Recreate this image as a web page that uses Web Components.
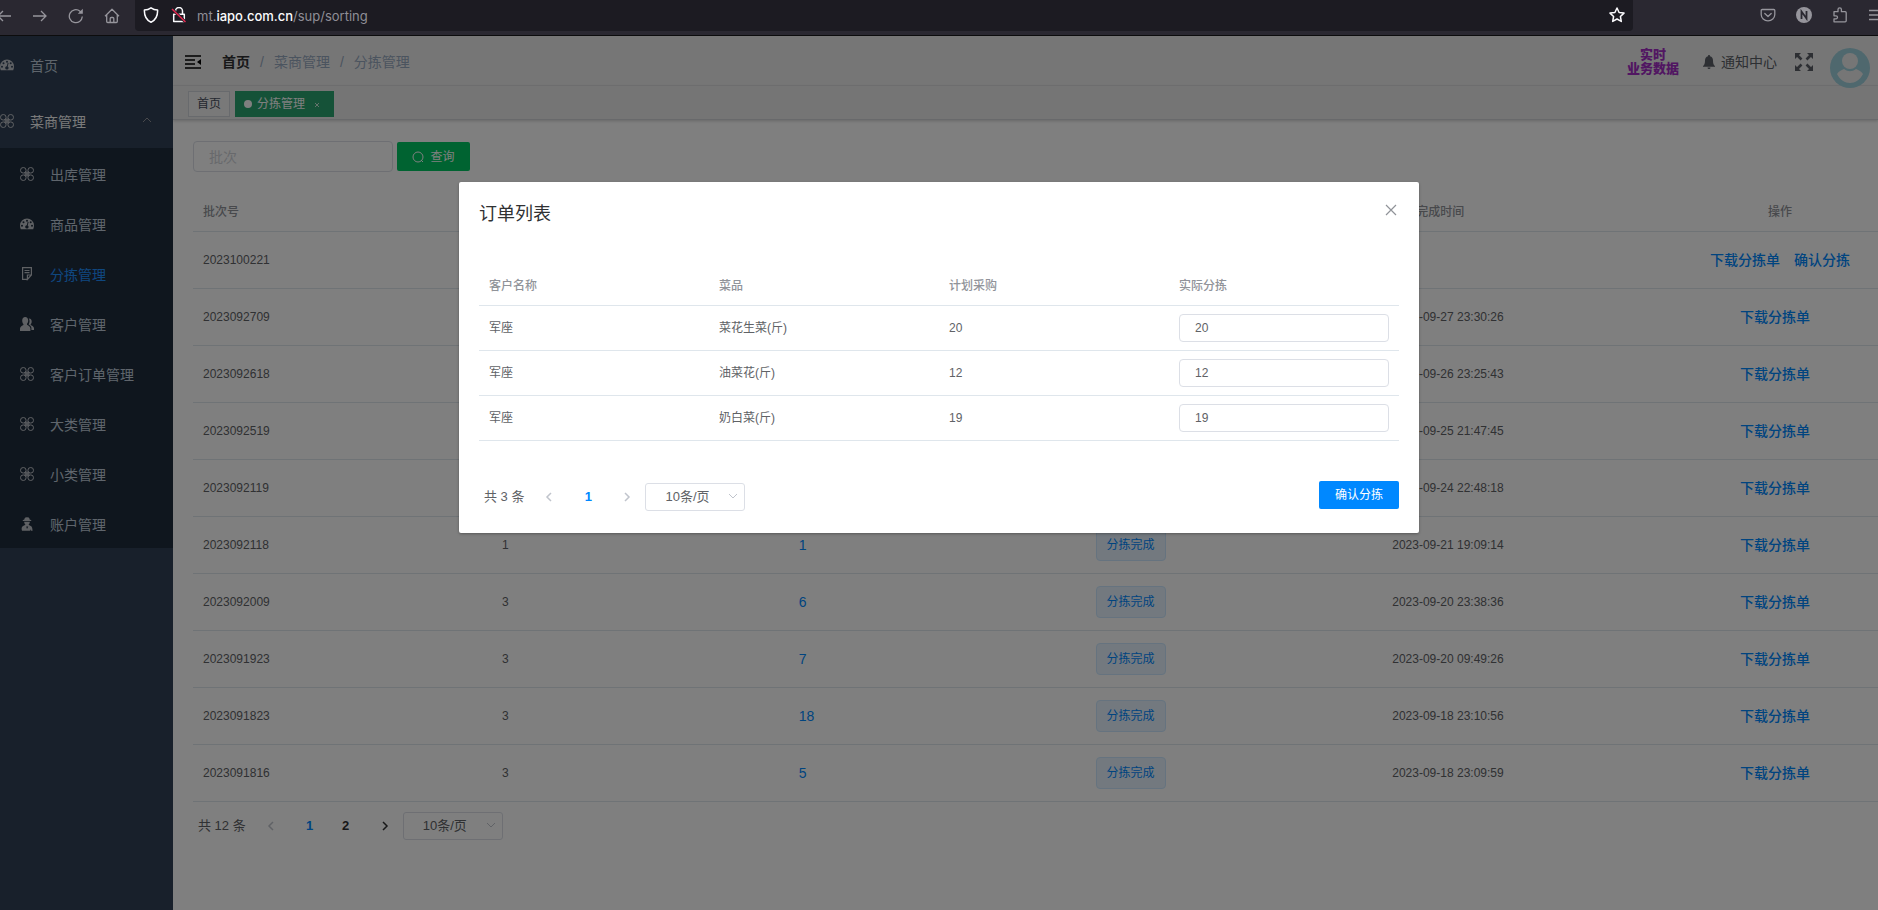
<!DOCTYPE html>
<html lang="zh-CN">
<head>
<meta charset="UTF-8">
<title>分拣管理</title>
<style>
    html, body {
        margin: 0;
        height: 100%;
        overflow: hidden;
        background: #fff;
    }
    body {
        display: flex;
        flex-direction: column;
        font-family: "Liberation Sans", "Noto Sans CJK SC", sans-serif;
        font-size: 12px;
        line-height: 20px;
        color: #606266;
        --primary: #0088ff;
        --line: #dfe6ec;
        --border: #dcdfe6;
    }
</style>
</head>
<body>
<c-browser-bar></c-browser-bar>
<c-layout>
    <c-sidebar slot="side"></c-sidebar>
    <c-navbar slot="top"></c-navbar>
    <c-tags slot="top"></c-tags>
    <c-sorting-page></c-sorting-page>
    <c-dialog slot="dialog" heading="订单列表">
        <c-order-table></c-order-table>
        <c-pagination slot="footer" total="3" pages="1"></c-pagination>
        <c-button slot="footer">确认分拣</c-button>
    </c-dialog>
</c-layout>

<script>
const BASE = `
    :host, *, *::before, *::after { box-sizing: border-box; }
    button, input, select { font: inherit; color: inherit; margin: 0; }
    button { border: 0; background: none; padding: 0; cursor: pointer; }
    a { color: inherit; text-decoration: none; }
    svg { display: block; flex: none; }
`;

const ICONS = {
    dashboard: `<path fill="currentColor" fill-rule="evenodd" d="M7 1.500a7 7 0 0 0-7 7c0 1.500.3 2.700.8 3.700h12.400c.5-1 .8-2.200.8-3.700a7 7 0 0 0-7-7zM7 2.700a1 1 0 1 1 0 2 1 1 0 0 1 0-2zM3.500 4.200a1 1 0 1 1 0 2 1 1 0 0 1 0-2zM2 7.700a1 1 0 1 1 0 2 1 1 0 0 1 0-2zM12 7.700a1 1 0 1 1 0 2 1 1 0 0 1 0-2zM7.700 4.800l.9.200-.9 3.400a1.700 1.700 0 1 1-.9-.2zM10.700 4.200a1 1 0 1 1 0 2 1 1 0 0 1 0-2z"/>`,
    component: `<g fill="none" stroke="currentColor" stroke-width="1"><circle cx="3.300" cy="3.300" r="2.800"/><circle cx="10.700" cy="3.300" r="2.800"/><circle cx="3.300" cy="10.700" r="2.800"/><circle cx="10.700" cy="10.700" r="2.800"/></g><path fill="currentColor" opacity=".8" d="M5.500 4.500h3l1 1v3l-1 1h-3l-1-1v-3z"/>`,
    note: `<g fill="none" stroke="currentColor" stroke-width="1.200"><path d="M7.500 12.400H2.600V.6h8.800v7.400l-4 4.400V8h4"/><path d="M4.500 3.500h5M4.500 5.700h5"/></g>`,
    peoples: `<path fill="currentColor" d="M5.200 0C7 0 8.200 1.400 8.200 3.400c0 1.600-.6 2.700-1.200 3.400v1c1 .7 3.200 1.500 3.400 3.400V14H0v-2.600C.2 9.500 2.300 8.700 3.400 7.900v-1C2.700 6.200 2.200 5 2.200 3.400 2.200 1.400 3.400 0 5.200 0zM8.800 1.500c1.800-.1 2.900 1.200 2.900 3 0 1.300-.5 2.200-1 2.800v.8c1 .6 3 1.400 3.300 2.900v2h-2.600v-2.300C11.200 9 9.700 8 8.600 7.400c.6-.9 1-2.200.9-3.400 0-1-.2-1.700-.7-2.500z"/>`,
    farmer: `<path fill="currentColor" fill-rule="evenodd" d="M4.200 2.700C4.500 1 5.300 0 6.500.2L7 .5l.6-.3C8.800 0 9.600 1 9.800 2.700l1.500.4-.2.800H2.900l-.2-.8zM4.200 4.700h5.600c0 1.300-.6 2.400-1.300 3l2.700 1.500c.7.500 1 1.700 1.200 3l.2 1.500-1.800.1-.4-1.500-.5 1.500H2L1.600 12c.1-1.700.6-2.500 1.400-2.900L5.500 7.700c-.7-.6-1.300-1.700-1.300-3zM6.200 9.400l.8 2.600 1.300-2.500z"/>`
};
const icon = (name, size = 14) => `<svg width="${size}" height="${size}" viewBox="0 0 14 14" aria-hidden="true">${ICONS[name]}</svg>`;

class BaseElement extends HTMLElement {
    connectedCallback() {
        if (this.shadowRoot) return;
        const template = document.createElement('template');
        template.innerHTML = `<style>${BASE}${this.styles()}</style>${this.render()}`;
        this.attachShadow({mode: 'open'}).appendChild(template.content.cloneNode(true));
    }
    styles() { return ''; }
    render() { return '<slot></slot>'; }
}

class cBrowserBar extends BaseElement {
    styles() {
        return `
            :host {
                display: flex;
                flex: none;
                align-items: flex-start;
                height: 36px;
                background: #2a2831;
                border-bottom: 1px solid #0c0c0d;
                color: #96959c;
                overflow: hidden;
            }
            .nav {
                display: flex;
                flex: none;
                width: 139px;
                gap: 20px;
                margin-left: -4px;
                padding-top: 8px;
            }
            .url {
                flex: 1;
                display: flex;
                align-items: center;
                height: 31px;
                padding: 0 8px;
                background: #1c1b22;
                border-radius: 0 0 4px 4px;
                color: #fbfbfe;
            }
            .url svg { margin-top: -2px; }
            .url svg + svg { margin-left: 12px; }
            .address {
                flex: 1;
                margin-left: 10px;
                font-family: Inter, sans-serif;
                font-size: 13px;
                color: #8f8e96;
            }
            .address b { color: #fbfbfe; font-weight: 500; }
            .tools {
                display: flex;
                flex: none;
                width: 245px;
                padding: 7px 0 0 127px;
                gap: 20px;
            }
        `;
    }
    render() {
        return `
            <div class="nav">
                <button aria-label="后退"><svg width="16" height="16" viewBox="0 0 16 16" fill="none" stroke="currentColor" stroke-width="1.300"><path d="M15 8H2M7 3 2 8l5 5"/></svg></button>
                <button aria-label="前进"><svg width="16" height="16" viewBox="0 0 16 16" fill="none" stroke="currentColor" stroke-width="1.300"><path d="M1 8h13M9 3l5 5-5 5"/></svg></button>
                <button aria-label="刷新"><svg width="16" height="16" viewBox="0 0 16 16" fill="none" stroke="currentColor" stroke-width="1.300"><path d="M14.300 8.500A6.500 6.500 0 1 1 12 3.200l1.500 1.600"/><path d="M14.800.8v5H9.800z" fill="currentColor" stroke="none"/></svg></button>
                <button aria-label="主页"><svg width="16" height="16" viewBox="0 0 16 16" fill="none" stroke="currentColor" stroke-width="1.300" stroke-linejoin="round"><path d="M1 8.200 8 1.200l7 7M2.700 7v6.500a1 1 0 0 0 1 1h8.600a1 1 0 0 0 1-1V7M6.200 14.500v-4a1 1 0 0 1 1-1h1.600a1 1 0 0 1 1 1v4"/></svg></button>
            </div>
            <div class="url">
                <svg width="16" height="16" viewBox="0 0 16 16" fill="none" stroke="currentColor" stroke-width="1.500" stroke-linejoin="round"><path d="M8 .8c2 1.500 4.200 2.200 6.600 2.300C14.800 8.800 12.500 13.200 8 15.200 3.500 13.200 1.200 8.800 1.400 3.100 3.800 3 6 2.300 8 .8z"/></svg>
                <svg width="16" height="16" viewBox="0 0 16 16" fill="none"><path d="M4.500 7V4a3.500 3.500 0 0 1 7 0v3M2.700 7.200h10.600v7.300H2.700z" stroke="currentColor" stroke-width="1.500" stroke-linejoin="round"/><path d="m1 2 13.500 13" stroke="#1c1b22" stroke-width="3"/><path d="m1 2 13.500 13" stroke="#e22850" stroke-width="1.500"/></svg>
                <span class="address">mt.<b>iapo.com.cn</b>/sup/sorting</span>
                <svg width="16" height="16" viewBox="0 0 16 16" fill="none" stroke="currentColor" stroke-width="1.500" stroke-linejoin="round"><path d="m8 1 2.100 4.500 4.900.6-3.600 3.400.9 4.900L8 12l-4.300 2.400.9-4.900L1 6.100l4.900-.6z"/></svg>
            </div>
            <div class="tools">
                <button aria-label="Pocket"><svg width="16" height="16" viewBox="0 0 16 16" fill="none" stroke="currentColor" stroke-width="1.300" stroke-linejoin="round" stroke-linecap="round"><path d="M2.200 2.500h11.600a1 1 0 0 1 1 1V7.500a6.800 6.400 0 0 1-13.600 0V3.500a1 1 0 0 1 1-1zM4.800 6.500 8 9.500l3.200-3"/></svg></button>
                <button aria-label="账号"><svg width="16" height="16" viewBox="0 0 16 16"><circle cx="8" cy="8" r="8" fill="#96959c"/><path d="M5.500 12V4.500l5 7V4" fill="none" stroke="#2a2831" stroke-width="1.800"/></svg></button>
                <button aria-label="扩展"><svg width="16" height="16" viewBox="0 0 16 16" fill="none" stroke="currentColor" stroke-width="1.300" stroke-linejoin="round"><path d="M2 6.500V4.700h4V2.500a1.700 1.700 0 0 1 3.400 0v2.200h3.800a1 1 0 0 1 1 1v8.100a1 1 0 0 1-1 1H2v-3h2a1.500 1.500 0 0 0 0-3H2z"/></svg></button>
                <button aria-label="菜单"><svg width="16" height="16" viewBox="0 0 16 16" fill="none" stroke="currentColor" stroke-width="1.300"><path d="M1 3.500h14M1 8h14M1 12.500h14"/></svg></button>
            </div>
        `;
    }
}

class cLayout extends BaseElement {
    styles() {
        return `
            :host {
                display: flex;
                flex: 1;
                min-height: 0;
                position: relative;
            }
            main { flex: 1; min-width: 0; overflow: hidden; }
        `;
    }
    render() {
        return `
            <slot name="side"></slot>
            <main><slot name="top"></slot><slot></slot></main>
            <slot name="dialog"></slot>
        `;
    }
}

class cSidebar extends BaseElement {
    items = [
        ['component', '出库管理'],
        ['dashboard', '商品管理'],
        ['note', '分拣管理'],
        ['peoples', '客户管理'],
        ['component', '客户订单管理'],
        ['component', '大类管理'],
        ['component', '小类管理'],
        ['farmer', '账户管理']
    ];
    styles() {
        return `
            :host {
                display: block;
                flex: none;
                width: 173px;
                background: #304156;
                color: #bfcbd9;
                font-size: 14px;
                line-height: normal;
            }
            a, .group {
                display: flex;
                align-items: center;
                width: 100%;
                height: 56px;
                gap: 16px;
                padding: 2px 20px 0 0;
            }
            .group { color: #f4f4f5; }
            .group span { flex: 1; text-align: left; }
            svg { color: #bfc2c8; }
            nav { background: #1f2d3d; }
            nav a { height: 50px; padding-left: 20px; }
            a.active { color: #1f8fff; }
        `;
    }
    render() {
        return `
            <a href="#home">${icon('dashboard')}<span>首页</span></a>
            <button class="group">${icon('component')}<span>菜商管理</span>
                <svg width="12" height="12" viewBox="0 0 12 12" fill="none" stroke="#909399"><path d="m2 7 4-4 4 4"/></svg></button>
            <nav>${this.items.map(([name, text]) => `<a href="#${text}"${text === '分拣管理' ? ' class="active"' : ''}>${icon(name)}<span>${text}</span></a>`).join('')}</nav>
        `;
    }
}

class cNavbar extends BaseElement {
    styles() {
        return `
            :host {
                display: flex;
                align-items: center;
                height: 50px;
                padding: 2px 8px 0 12px;
                background: #ededed;
                border-bottom: 1px solid #e2e2e4;
                font-size: 14px;
                color: #5a5e66;
            }
            .crumbs {
                display: flex;
                flex: 1;
                align-items: baseline;
                gap: 10px;
                margin-left: 21px;
                color: #97a8be;
            }
            .crumbs a { color: #303133; font-weight: 700; }
            .live {
                width: 52px;
                text-align: center;
                font-size: 13px;
                line-height: 14px;
                font-weight: 900;
                color: #a32cc4;
            }
            .notice { display: flex; align-items: center; gap: 6px; margin: 0 18px 0 24px; }
            .avatar { margin: 12px 0 0 17px; }
        `;
    }
    render() {
        return `
            <button aria-label="收起菜单"><svg width="16" height="14" viewBox="0 0 16 14" fill="none" stroke="#000" stroke-width="1.500"><path d="M0 1h16M0 5h10M0 9h10M0 13h16"/><path d="M16 4v6l-4-3z" fill="#000" stroke="none"/></svg></button>
            <div class="crumbs"><a href="#home">首页</a><span>/</span><span>菜商管理</span><span>/</span><span>分拣管理</span></div>
            <div class="live">实时<br>业务数据</div>
            <div class="notice"><svg width="12" height="14" viewBox="0 0 12 14" fill="currentColor"><path d="M6 0c.8 0 1 .5 1 1.200 2 .5 3 2.200 3 4.200 0 3 .6 4.600 2 5.600v.8H0V11c1.400-1 2-2.600 2-5.600 0-2 1-3.700 3-4.200C5 .5 5.200 0 6 0zM4.500 12.500h3a1.500 1.500 0 0 1-3 0z"/></svg><span>通知中心</span></div>
            <button aria-label="全屏"><svg width="18" height="18" viewBox="0 0 18 18" fill="#5a5e66" stroke="#5a5e66" stroke-width="2.600"><path d="m2 2 4.500 4.500M16 2l-4.500 4.500M2 16l4.500-4.500M16 16l-4.500-4.500"/><path stroke="none" d="M0 0h6L0 6zM18 0v6l-6-6zM0 18v-6l6 6zM18 18h-6l6-6z"/></svg></button>
            <svg class="avatar" width="40" height="40" viewBox="0 0 40 40"><circle cx="20" cy="20" r="20" fill="#9fd0dc"/><circle cx="20" cy="13" r="8" fill="#ededed"/><path d="M7 26c2-3 5-4 7-5 4 3 8 3 12 0 2 1 5 2 7 5-3 6-8 9-13 9S10 32 7 26z" fill="#ededed"/></svg>
        `;
    }
}

class cTags extends BaseElement {
    styles() {
        return `
            :host {
                display: flex;
                gap: 5px;
                height: 34px;
                padding: 5px 15px 0;
                background: #ebebeb;
                border-bottom: 1px solid #d0d2d6;
                box-shadow: 0 1px 3px rgba(0, 0, 0, .2);
            }
            a {
                display: flex;
                align-items: center;
                height: 26px;
                padding: 0 8px;
                border: 1px solid #d0d4da;
                color: #495060;
                background: #f3f3f3;
            }
            a.active {
                gap: 5px;
                background: #2ba471;
                border-color: #2ba471;
                color: #fff;
                padding-right: 13px;
            }
            a.active::before {
                content: '';
                width: 8px;
                height: 8px;
                border-radius: 50%;
                background: #fff;
            }
            svg { margin: 2px 0 0 4px; }
        `;
    }
    render() {
        return `
            <a href="#home">首页</a>
            <a href="#sorting" class="active">分拣管理<svg width="6" height="6" viewBox="0 0 6 6" stroke="#c8e6d9"><path d="m1 1 4 4M5 1 1 5"/></svg></a>
        `;
    }
}

class cSortingPage extends BaseElement {
    rows = [
        {batch: '2023100221', pending: true},
        {batch: '2023092709', time: '2023-09-27 23:30:26'},
        {batch: '2023092618', time: '2023-09-26 23:25:43'},
        {batch: '2023092519', time: '2023-09-25 21:47:45'},
        {batch: '2023092119', time: '2023-09-24 22:48:18'},
        {batch: '2023092118', customers: 1, dishes: 1, state: '分拣完成', time: '2023-09-21 19:09:14'},
        {batch: '2023092009', customers: 3, dishes: 6, state: '分拣完成', time: '2023-09-20 23:38:36'},
        {batch: '2023091923', customers: 3, dishes: 7, state: '分拣完成', time: '2023-09-20 09:49:26'},
        {batch: '2023091823', customers: 3, dishes: 18, state: '分拣完成', time: '2023-09-18 23:10:56'},
        {batch: '2023091816', customers: 3, dishes: 5, state: '分拣完成', time: '2023-09-18 23:09:59'}
    ];
    styles() {
        return `
            :host { display: block; padding: 21px 0 0 20px; }
            form { display: flex; align-items: center; gap: 4px; margin-bottom: 20px; }
            input {
                width: 200px;
                height: 31px;
                padding: 0 15px;
                border: 1px solid var(--border);
                border-radius: 4px;
                background: #fff;
                font-size: 14px;
            }
            input::placeholder { color: #d0d3d9; }
            form button {
                display: flex;
                align-items: center;
                justify-content: center;
                gap: 6px;
                width: 73px;
                height: 29px;
                border-radius: 2px;
                background: #00c763;
                color: #fff;
            }
            /* the table runs slightly past the right edge */
            table {
                width: calc(100% + 3px);
                table-layout: fixed;
                border-collapse: separate;
                border-spacing: 0;
            }
            col.batch { width: 299px; }
            col.action { width: 202px; }
            th, td {
                height: 57px;
                padding: 0 10px;
                text-align: left;
                border-bottom: 1px solid var(--line);
            }
            th { height: 40px; color: #909399; font-weight: 500; }
            td a { color: var(--primary); font-size: 14px; }
            .tag {
                display: inline-block;
                height: 32px;
                line-height: 30px;
                padding: 0 10px;
                border: 1px solid #cce7ff;
                border-radius: 4px;
                background: #e6f3ff;
                color: var(--primary);
            }
            tr > :last-child { text-align: center; }
            td button { color: var(--primary); font-size: 14px; font-weight: 500; margin-right: 10px; }
            td button + button { margin: 0 0 0 4px; }
            c-pagination { margin-top: 8px; }
        `;
    }
    render() {
        return `
            <form>
                <input type="text" placeholder="批次" aria-label="批次">
                <button type="button"><svg width="12" height="12" viewBox="0 0 12 12" fill="none" stroke="#fff" stroke-width="1"><circle cx="6" cy="6" r="5"/><path d="m9 9 2 2"/></svg>查询</button>
            </form>
            <table>
                <colgroup><col class="batch"><col><col><col><col><col class="action"></colgroup>
                <thead><tr><th>批次号</th><th></th><th></th><th></th><th>分拣完成时间</th><th>操作</th></tr></thead>
                <tbody>${this.rows.map(row => `
                    <tr>
                        <td>${row.batch}</td>
                        <td>${row.customers || ''}</td>
                        <td>${row.dishes ? `<a href="#${row.batch}">${row.dishes}</a>` : ''}</td>
                        <td>${row.state ? `<span class="tag">${row.state}</span>` : ''}</td>
                        <td>${row.time || ''}</td>
                        <td><button>下载分拣单</button>${row.pending ? '<button>确认分拣</button>' : ''}</td>
                    </tr>`).join('')}
                </tbody>
            </table>
            <c-pagination total="12" pages="2"></c-pagination>
        `;
    }
}

class cPagination extends BaseElement {
    styles() {
        return `
            :host {
                display: flex;
                align-items: center;
                padding: 2px 5px;
                font-size: 13px;
                color: #606266;
            }
            .total { margin-right: 10px; }
            button {
                display: flex;
                align-items: center;
                justify-content: center;
                width: 36px;
                height: 28px;
                font-weight: 700;
                color: #303133;
            }
            button:disabled { color: #c0c4cc; }
            .prev { padding-right: 6px; }
            .next { padding-left: 6px; }
            .current { color: var(--primary); }
            .size {
                display: grid;
                align-items: center;
                width: 100px;
                margin-left: 3px;
            }
            select, .size svg { grid-area: 1 / 1; }
            select {
                appearance: none;
                width: 100%;
                height: 28px;
                padding: 0 20px 0 19px;
                border: 1px solid var(--border);
                border-radius: 3px;
                background: transparent;
            }
            .size svg { justify-self: end; margin-right: 6px; pointer-events: none; }
        `;
    }
    render() {
        const pages = Number(this.getAttribute('pages'));
        const numbers = Array.from({length: pages}, (_, i) => `<button${i === 0 ? ' class="current"' : ''}>${i + 1}</button>`).join('');
        return `
            <span class="total">共 ${this.getAttribute('total')} 条</span>
            <button class="prev" disabled aria-label="上一页"><svg width="12" height="12" viewBox="0 0 12 12" fill="none" stroke="currentColor" stroke-width="1.500"><path d="M8 2 4 6l4 4"/></svg></button>
            ${numbers}
            <button class="next"${pages > 1 ? '' : ' disabled'} aria-label="下一页"><svg width="12" height="12" viewBox="0 0 12 12" fill="none" stroke="currentColor" stroke-width="1.500"><path d="m4 2 4 4-4 4"/></svg></button>
            <label class="size">
                <select aria-label="每页条数"><option>10条/页</option><option>20条/页</option></select>
                <svg width="12" height="12" viewBox="0 0 12 12" fill="none" stroke="#c0c4cc"><path d="m2 3 4 4 4-4"/></svg>
            </label>
        `;
    }
}

class cButton extends BaseElement {
    styles() {
        return `
            :host { display: block; }
            button {
                height: 28px;
                padding: 0 16px;
                border-radius: 2px;
                background: var(--primary);
                color: #fff;
            }
        `;
    }
    render() { return '<button><slot></slot></button>'; }
}

class cDialog extends BaseElement {
    styles() {
        return `
            :host {
                position: absolute;
                inset: 0;
                background: rgba(0, 0, 0, .5);
            }
            section {
                width: 960px;
                max-width: 100%;
                margin: 146px auto 0;
                padding: 20px;
                border-radius: 2px;
                background: #fff;
                box-shadow: 0 1px 3px rgba(0, 0, 0, .3);
            }
            header {
                display: flex;
                justify-content: space-between;
                align-items: flex-start;
                margin-bottom: 40px;
            }
            h2 {
                margin: 0;
                font-size: 18px;
                line-height: 24px;
                font-weight: 400;
                color: #303133;
            }
            footer {
                display: flex;
                justify-content: space-between;
                align-items: flex-start;
                margin-top: 40px;
            }
        `;
    }
    render() {
        return `
            <section role="dialog" aria-label="${this.getAttribute('heading')}">
                <header><h2>${this.getAttribute('heading')}</h2>
                    <button aria-label="关闭"><svg width="16" height="16" viewBox="0 0 16 16" stroke="#909399" stroke-width="1.200"><path d="m3 3 10 10M13 3 3 13"/></svg></button></header>
                <slot></slot>
                <footer><slot name="footer"></slot></footer>
            </section>
        `;
    }
}

class cOrderTable extends BaseElement {
    rows = [
        ['军座', '菜花生菜(斤)', 20],
        ['军座', '油菜花(斤)', 12],
        ['军座', '奶白菜(斤)', 19]
    ];
    styles() {
        return `
            :host { display: block; }
            table { width: 100%; table-layout: fixed; border-spacing: 0; }
            th, td {
                height: 45px;
                padding: 0 10px;
                text-align: left;
                border-bottom: 1px solid var(--line);
            }
            th { height: 40px; color: #909399; font-weight: 500; }
            input {
                display: block;
                width: 100%;
                height: 28px;
                padding: 0 15px;
                border: 1px solid var(--border);
                border-radius: 4px;
            }
        `;
    }
    render() {
        return `
            <table>
                <thead><tr><th>客户名称</th><th>菜品</th><th>计划采购</th><th>实际分拣</th></tr></thead>
                <tbody>${this.rows.map(([customer, dish, amount]) => `
                    <tr><td>${customer}</td><td>${dish}</td><td>${amount}</td><td><input type="text" value="${amount}" aria-label="${dish} 实际分拣"></td></tr>`).join('')}
                </tbody>
            </table>
        `;
    }
}

customElements.define('c-browser-bar', cBrowserBar);
customElements.define('c-layout', cLayout);
customElements.define('c-sidebar', cSidebar);
customElements.define('c-navbar', cNavbar);
customElements.define('c-tags', cTags);
customElements.define('c-pagination', cPagination);
customElements.define('c-sorting-page', cSortingPage);
customElements.define('c-button', cButton);
customElements.define('c-dialog', cDialog);
customElements.define('c-order-table', cOrderTable);
</script>
</body>
</html>
